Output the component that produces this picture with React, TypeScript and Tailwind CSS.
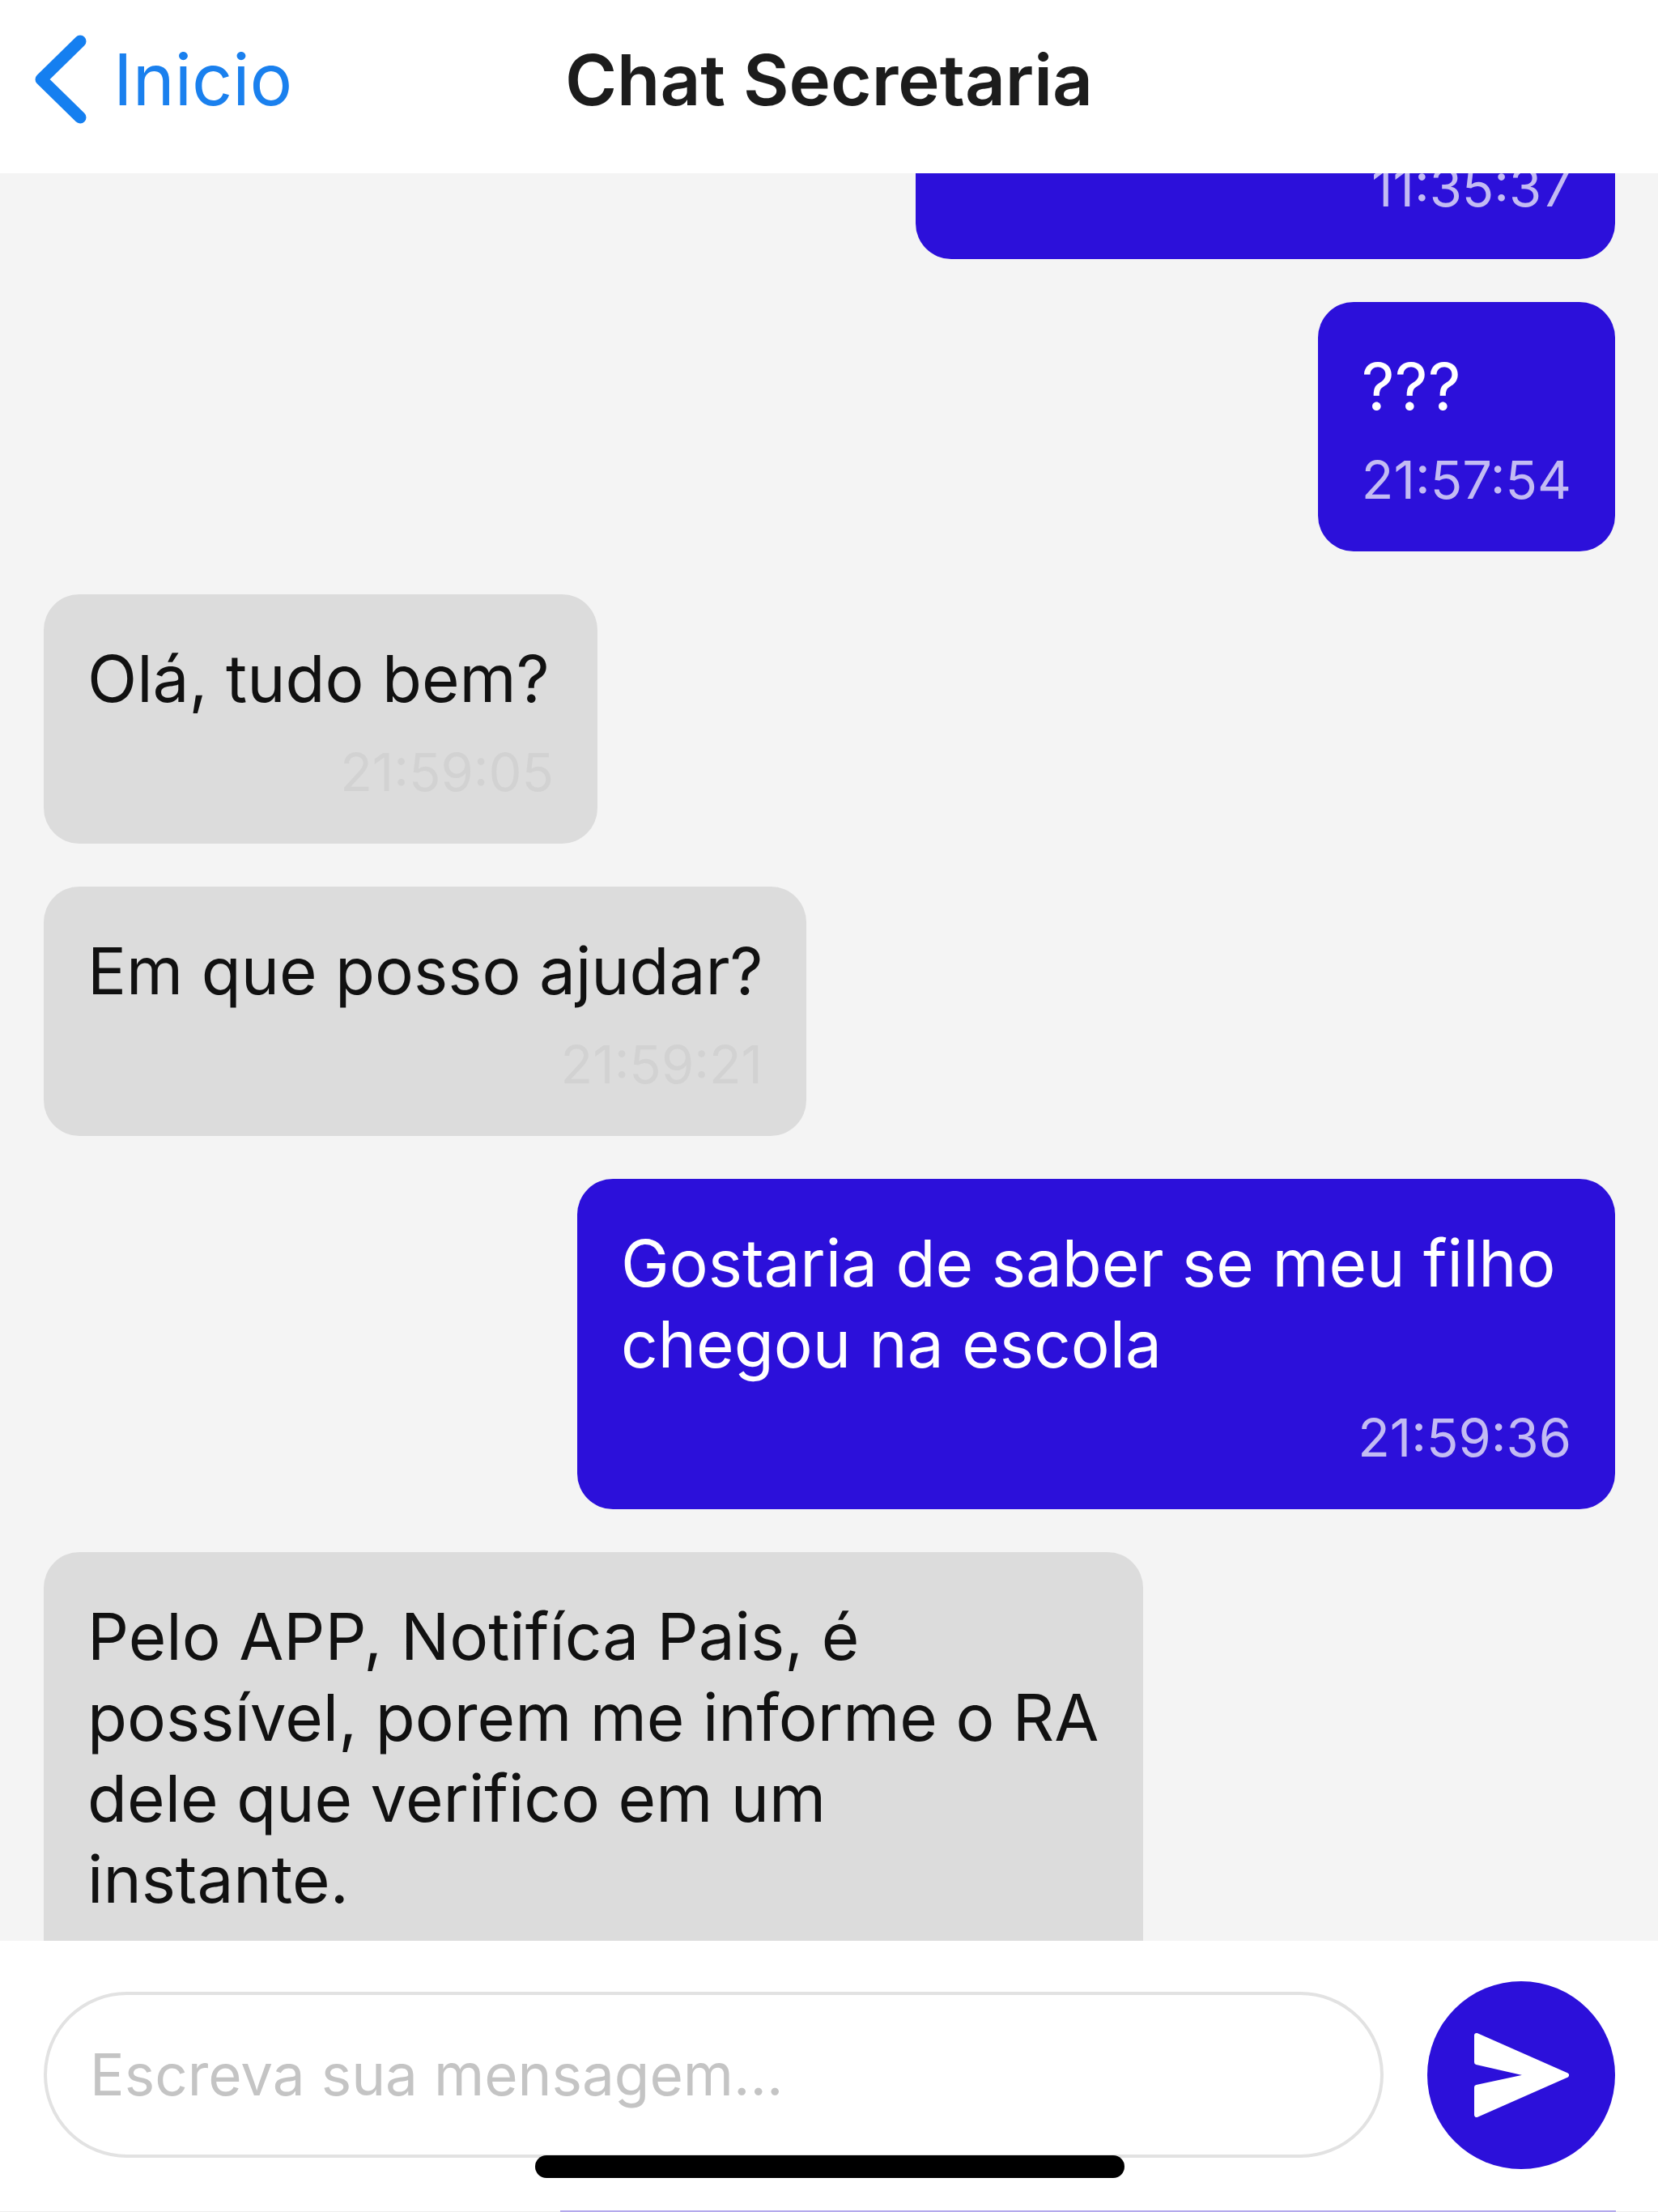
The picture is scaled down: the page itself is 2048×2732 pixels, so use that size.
const font = { fontFamily: 'Inter, "Liberation Sans", sans-serif' };

type Msg = { text: string; time?: string; mine: boolean; size: string };

const messages: Msg[] = [
  { text: '???', time: '21:57:54', mine: true, size: 'w-fit' },
  { text: 'Olá, tudo bem?', time: '21:59:05', mine: false, size: 'w-[684px]' },
  { text: 'Em que posso ajudar?', time: '21:59:21', mine: false, size: 'w-[942px]' },
  { text: 'Gostaria de saber se meu filho\nchegou na escola', time: '21:59:36', mine: true, size: 'w-[1282px]' },
  // a hora dessa mensagem fica escondida atrás do rodapé
  {
    text: 'Pelo APP, Notifíca Pais, é\npossível, porem me informe o RA\ndele que verifico em um\ninstante.',
    mine: false,
    size: 'w-[1358px] min-h-[610px]',
  },
];

function Bubble({ msg }: { msg: Msg }) {
  return (
    <div
      className={`flex shrink-0 flex-col rounded-[44px] px-[54px] pt-[54px] pb-[48px] ${msg.size} ${
        msg.mine ? 'self-end bg-[#2c10da] text-white' : 'self-start bg-[#dcdcdc] text-[#111111]'
      }`}
    >
      <p className="whitespace-pre text-[80px] leading-[100px]">{msg.text}</p>
      {msg.time && (
        <span
          className={`mt-[26px] self-end text-[65px] leading-[80px] ${
            msg.mine ? 'text-[#c3bbf3]' : 'text-[#d2d2d2]'
          }`}
        >
          {msg.time}
        </span>
      )}
    </div>
  );
}

export default function App() {
  return (
    <div className="relative flex h-[2732px] w-[2048px] flex-col overflow-hidden bg-white" style={font}>
      <header className="relative flex h-[214px] shrink-0 items-center justify-center bg-white">
        <div className="absolute top-[43px] left-[41px] flex items-center gap-[29px]">
          <svg width="70" height="110" viewBox="0 0 70 110" fill="none">
            <path
              d="M58 8 L10 55 L58 102"
              stroke="#157ff0"
              strokeWidth="15"
              strokeLinecap="round"
              strokeLinejoin="round"
            />
          </svg>
          <span className="text-[88px] leading-none text-[#1a80ee]">Inicio</span>
        </div>
        <h1 className="mb-[16px] text-[87px] font-semibold text-[#1c1c1c]">Chat Secretaria</h1>
      </header>

      <main className="flex min-h-0 flex-1 flex-col gap-[53px] overflow-hidden bg-[#f4f4f4] pr-[53px] pl-[54px]">
        <div className="mt-[-100px] flex h-[206px] w-[864px] shrink-0 flex-col justify-end self-end rounded-[44px] bg-[#2c10da] px-[54px] pb-[50px]">
          <span className="self-end text-[65px] leading-[76px] text-[#c3bbf3]">11:35:37</span>
        </div>
        {messages.map((m) => (
          <Bubble key={m.text} msg={m} />
        ))}
      </main>

      <footer className="flex h-[335px] shrink-0 items-start gap-[54px] border-b border-[#eeeeee] bg-white pt-[50px] pr-[53px] pl-[54px]">
        <div className="mt-[13px] flex h-[205px] min-w-0 flex-1 items-center rounded-full border-[4px] border-[#e2e2e2] pl-[53px]">
          <span className="text-[71px] text-[#c4c4c4]">Escreva sua mensagem...</span>
        </div>
        <button className="flex h-[232px] w-[232px] shrink-0 items-center justify-center rounded-full bg-[#2c10da]">
          <svg width="119" height="106" viewBox="0 0 119 106">
            <path
              d="M4 4 L115 53 L4 102 L4 68 L74 53 L4 37 Z"
              fill="#ffffff"
              stroke="#ffffff"
              strokeWidth="6"
              strokeLinejoin="round"
            />
          </svg>
        </button>
      </footer>

      <div className="absolute top-[2662px] left-[661px] h-[28px] w-[728px] rounded-full bg-black" />
      <div className="absolute bottom-0 left-[692px] h-[2px] w-[1304px] bg-[#b3a8ec]" />
    </div>
  );
}
